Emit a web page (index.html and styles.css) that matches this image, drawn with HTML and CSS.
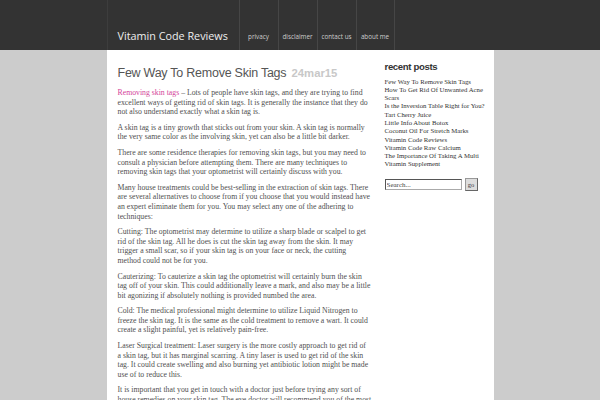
FILE: index.html
```html
<!DOCTYPE html>
<html>
<head>
<meta charset="utf-8">
<link rel="stylesheet" href="styles.css">
</head>
<body>
<header class="masthead">
  <div class="masthead-inner">
    <div class="site-title">Vitamin Code Reviews</div>
    <nav class="nav">
      <a class="nav-item">privacy</a>
      <a class="nav-item">disclaimer</a>
      <a class="nav-item">contact us</a>
      <a class="nav-item">about me</a>
    </nav>
  </div>
</header>
<div class="page">
  <main class="main">
    <h1 class="post-title">Few Way To Remove Skin Tags <span class="post-date">24mar15</span></h1>
    <p><a class="pink">Removing skin tags</a> – Lots of people have skin tags, and they are trying to find<br>excellent ways of getting rid of skin tags. It is generally the instance that they do<br>not also understand exactly what a skin tag is.</p>
    <p>A skin tag is a tiny growth that sticks out from your skin. A skin tag is normally<br>the very same color as the involving skin, yet can also be a little bit darker.</p>
    <p>There are some residence therapies for removing skin tags, but you may need to<br>consult a physician before attempting them. There are many techniques to<br>removing skin tags that your optometrist will certainly discuss with you.</p>
    <p>Many house treatments could be best-selling in the extraction of skin tags. There<br>are several alternatives to choose from if you choose that you would instead have<br>an expert eliminate them for you. You may select any one of the adhering to<br>techniques:</p>
    <p>Cutting: The optometrist may determine to utilize a sharp blade or scalpel to get<br>rid of the skin tag. All he does is cut the skin tag away from the skin. It may<br>trigger a small scar, so if your skin tag is on your face or neck, the cutting<br>method could not be for you.</p>
    <p>Cauterizing: To cauterize a skin tag the optometrist will certainly burn the skin<br>tag off of your skin. This could additionally leave a mark, and also may be a little<br>bit agonizing if absolutely nothing is provided numbed the area.</p>
    <p>Cold: The medical professional might determine to utilize Liquid Nitrogen to<br>freeze the skin tag. It is the same as the cold treatment to remove a wart. It could<br>create a slight painful, yet is relatively pain-free.</p>
    <p>Laser Surgical treatment: Laser surgery is the more costly approach to get rid of<br>a skin tag, but it has marginal scarring. A tiny laser is used to get rid of the skin<br>tag. It could create swelling and also burning yet antibiotic lotion might be made<br>use of to reduce this.</p>
    <p>It is important that you get in touch with a doctor just before trying any sort of<br>house remedies on your skin tag. The eye doctor will recommend you of the most<br>effective means to remove it.</p>
  </main>
  <aside class="sidebar">
    <h2 class="side-title">recent posts</h2>
    <ul class="recent">
      <li>Few Way To Remove Skin Tags</li>
      <li>How To Get Rid Of Unwanted Acne Scars</li>
      <li>Is the Inversion Table Right for You?</li>
      <li>Tart Cherry Juice</li>
      <li>Little Info About Botox</li>
      <li>Coconut Oil For Stretch Marks</li>
      <li>Vitamin Code Reviews</li>
      <li>Vitamin Code Raw Calcium</li>
      <li>The Importance Of Taking A Multi Vitamin Supplement</li>
    </ul>
    <form class="search">
      <input class="search-input" type="text" value="Search...">
      <button class="search-btn" type="button">go</button>
    </form>
  </aside>
</div>
</body>
</html>
```
FILE: styles.css
```css
html, body {
  margin: 0;
  padding: 0;
}
body {
  background: #cccccc;
  font-family: "Liberation Serif", serif;
  height: 400px;
  overflow: hidden;
}
.masthead {
  background: #333333;
  height: 50px;
}
.masthead-inner {
  width: 387px;
  margin: 0 auto;
  height: 50px;
  display: flex;
  border-left: 1px solid #3d3d3d;
  box-sizing: border-box;
}
.site-title {
  width: 131px;
  padding-left: 10px;
  box-sizing: border-box;
  color: #eeeeee;
  font-family: "Open Sans", "DejaVu Sans", sans-serif;
  font-size: 10.8px;
  line-height: 1;
  padding-top: 31px;
}
.nav {
  display: flex;
  height: 50px;
}
.nav-item {
  width: 39px;
  border-left: 1px solid #464646;
  box-sizing: border-box;
  color: #cccccc;
  font-family: "Open Sans", "DejaVu Sans", sans-serif;
  font-size: 6.3px;
  text-align: center;
  padding-top: 34px;
  line-height: 1;
}
.nav-item:last-child {
  border-right: 1px solid #464646;
}
.page {
  width: 387px;
  margin: 0 auto;
  background: #ffffff;
  display: flex;
  min-height: 350px;
  padding: 15px 8px 0 11px;
  box-sizing: border-box;
}
.main {
  width: 254px;
  flex: none;
  color: #505050;
  font-size: 7.78px;
  line-height: 9.6px;
}
.post-title {
  margin: 0 0 7px 0;
  font-family: "Liberation Sans", Arial, sans-serif;
  font-weight: normal;
  font-size: 12.5px;
  letter-spacing: -0.25px;
  line-height: 16px;
  color: #555555;
}
.post-date {
  color: #c8c8c8;
  font-size: 11.3px;
  font-weight: bold;
  letter-spacing: 0;
  margin-left: 2px;
}
.main p {
  margin: 0 0 6px 0;
  white-space: nowrap;
}
.pink {
  color: #d4449a;
}
.sidebar {
  margin-left: 13px;
  width: 102px;
  color: #333333;
}
.side-title {
  margin: -4.5px 0 5px 0;
  font-family: "Liberation Sans", Arial, sans-serif;
  font-size: 9.6px;
  font-weight: bold;
  line-height: 12px;
  color: #333333;
  letter-spacing: -0.35px;
}
.recent {
  list-style: none;
  margin: 0;
  padding: 0;
  font-size: 6.75px;
  line-height: 8.3px;
}
.search {
  display: flex;
  align-items: center;
  margin: 9.5px 0 0 0;
}
.search-input {
  width: 77px;
  height: 11px;
  box-sizing: border-box;
  border: 1px solid #aaa;
  border-top-color: #555;
  border-left-color: #555;
  padding: 0 1px;
  font-family: "Liberation Serif", serif;
  font-size: 7px;
  color: #444;
}
.search-btn {
  margin-left: 3px;
  width: 13px;
  height: 13px;
  padding: 0;
  border: 1px solid #999;
  border-right-color: #666;
  border-bottom-color: #666;
  background: #dddddd;
  font-family: "Liberation Serif", serif;
  font-size: 6.5px;
  color: #333;
}
```
